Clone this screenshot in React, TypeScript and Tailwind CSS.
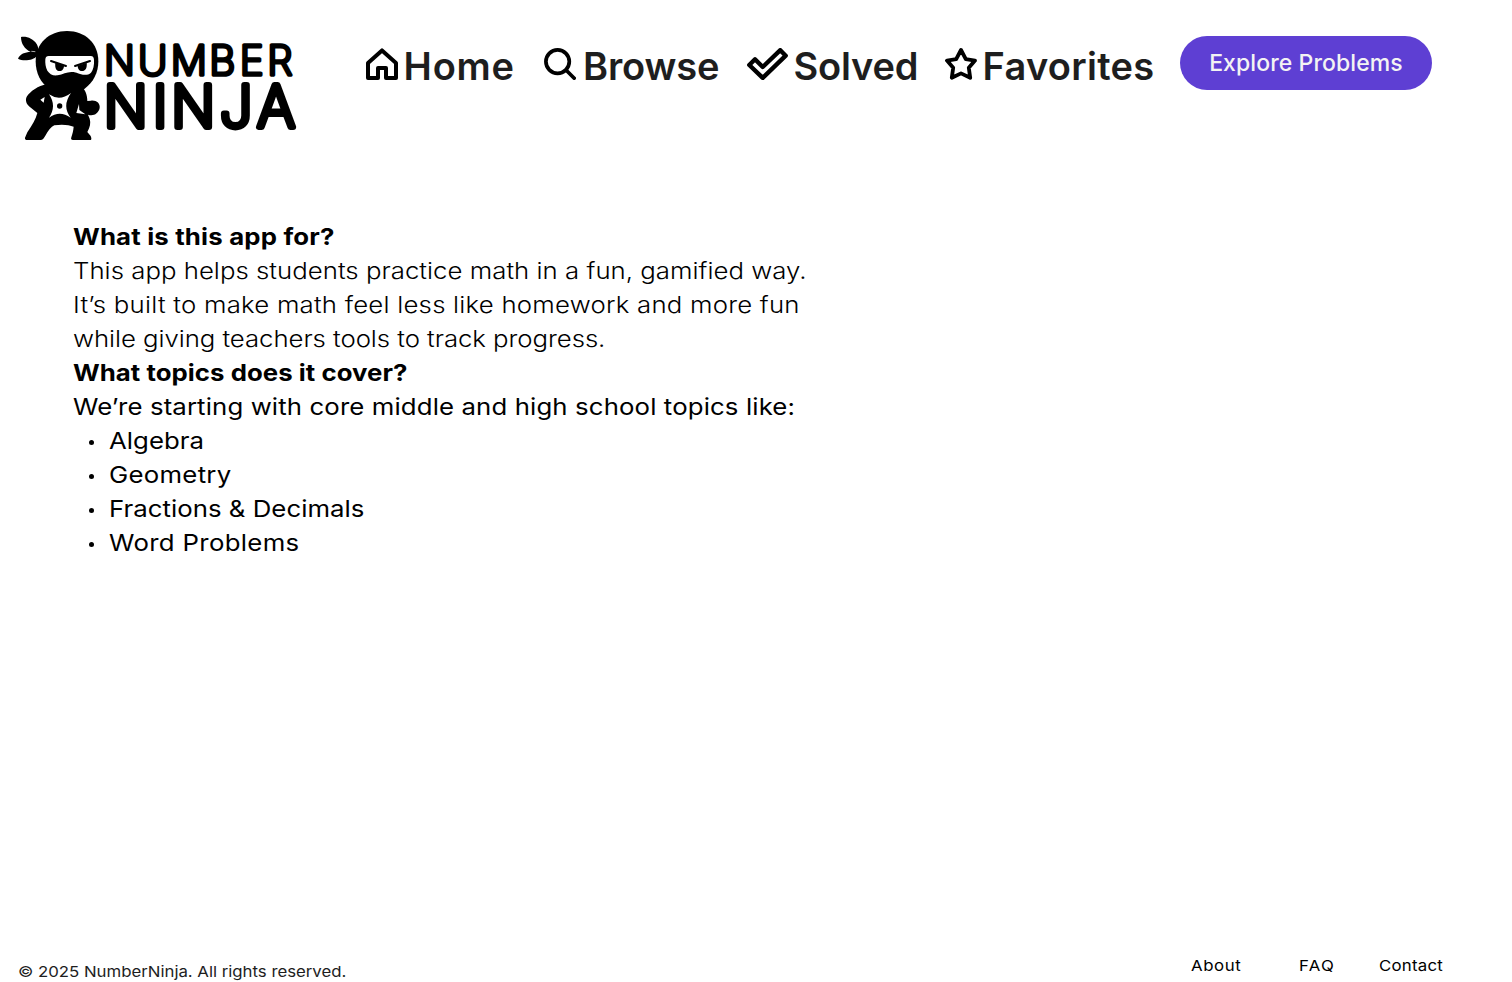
import React from "react";

function Logo() {
  return (
    <svg viewBox="0 0 885 375" className="h-[125px] w-[295px] shrink-0" role="img" aria-label="Number Ninja">
      {/* head scarf knot */}
      <path d="M33 39C50 36 70 44 80 60C84 67 86 74 84 80L92 92L80 97C72 108 40 114 24 104C30 90 45 84 62 84C44 74 33 60 33 39Z" />
      <path d="M64 82L76 83" stroke="#fff" strokeWidth="2" />
      {/* head */}
      <path d="M171 21C226 21 265 58 265 112C265 146 250 175 224 194L205 204H138L120 196C92 178 77 148 77 112C77 58 117 21 171 21Z" />
      <path d="M116 96H242C249 96 252 101 252 108C253 124 250 137 243 146C236 153 224 154 213 151C198 146 194 144 184 144C170 144 158 151 143 154C128 156 118 149 112 140C107 131 105 118 106 106C107 99 110 96 116 96Z" fill="#fff" />
      <path d="M123 111L168 126M240 111L195 126" fill="none" stroke="#000" strokeWidth="6" strokeLinecap="round" />
      <path d="M136 116L162 125C162 134 157 141 149 141C140 141 134 134 136 116ZM230 116L203 125C203 134 208 141 216 141C226 141 232 132 230 116Z" />
      {/* torso, arms and legs */}
      <path d="M110 180C84 186 62 201 51 217C45 227 48 238 57 247L82 267C77 286 67 303 52 325L45 341C44 346 47 348 52 348H91C99 348 102 341 106 335C115 319 123 309 133 304C154 300 177 302 191 308C190 321 187 331 184 340C182 346 184 348 189 348H241C246 348 244 341 242 336L232 324C240 309 243 297 239 284L234 272C250 277 265 270 269 252C271 238 259 228 243 230L232 231C232 212 226 194 208 182Z" />
      {/* gaps between arms and torso */}
      <path d="M91 227L104 219L101 236Z" fill="#fff" />
      <path d="M207 240L208 258L226 271L199 267Z" fill="#fff" />
      {/* throwing star */}
      <path d="M117 211Q149 233 183 207Q155 246 182 281Q149 257 117 281Q141 246 117 211Z" fill="#fff" />
      <circle cx="149" cy="246" r="8" />
      <g fill="#000" stroke="#000" strokeLinejoin="round" strokeLinecap="round" className="font-['Inter',sans-serif] font-extralight">
        <text x="282 384 482 598 689 772" y="153" fontSize="121" strokeWidth="11">NUMBER</text>
        <text x="281 428 484 630 742" y="308" fontSize="172" strokeWidth="18">NINJA</text>
      </g>
    </svg>
  );
}

const icon = "mt-1 h-8 shrink-0 fill-none stroke-black";

function HomeIcon() {
  return (
    <svg viewBox="0 0 32 32" className={`${icon} w-8`} strokeWidth="4" strokeLinejoin="round">
      <path d="M2 15L16 2.4L30 15V30H20V20H12V30H2Z" />
    </svg>
  );
}

function SearchIcon() {
  return (
    <svg viewBox="0 0 32 32" className={`${icon} w-8`} strokeWidth="3.7" strokeLinecap="round">
      <circle cx="13.6" cy="13.6" r="11.7" />
      <path d="M22 22L30.2 30.2" />
    </svg>
  );
}

function CheckIcon() {
  return (
    <svg viewBox="0 0 41 32" className={`${icon} w-[41px]`} strokeWidth="4.4" strokeLinejoin="round">
      <path d="M2.3 17L8 11.3L15.7 19L33.3 2.2L38.7 7.7L15.7 29.8Z" />
    </svg>
  );
}

function StarIcon() {
  return (
    <svg viewBox="0 0 32 32" className={`${icon} w-8`} strokeWidth="3.8" strokeLinejoin="round">
      <path d="M16 2L20.8 11.2L30 12.6L23.8 19.8L25.2 29.8L16 25.4L6.8 29.8L8.2 19.8L2 12.6L11.2 11.2Z" />
    </svg>
  );
}

const navItem = "flex items-start text-[38px] leading-[44px] font-semibold whitespace-nowrap text-[#1e1e1e]";

function Header() {
  return (
    <header className="flex items-start pt-6 pl-[10px]">
      <Logo />
      <nav className="mt-5 ml-[61px] flex">
        <a className={`${navItem} w-[178px] gap-[5.5px] tracking-[0.8px]`}><HomeIcon />Home</a>
        <a className={`${navItem} w-[203px] gap-[7px] tracking-[-0.15px]`}><SearchIcon />Browse</a>
        <a className={`${navItem} w-[198px] gap-[5.5px] tracking-[-0.2px]`}><CheckIcon />Solved</a>
        <a className={`${navItem} w-[235px] gap-[5.5px] tracking-[0.3px]`}><StarIcon />Favorites</a>
      </nav>
      <button className="mt-3 h-[54px] w-[252px] rounded-full bg-[#5e3fd3] text-[23px] font-medium tracking-[0.1px] whitespace-nowrap text-[#f3f3f3]">
        Explore Problems
      </button>
    </header>
  );
}

const wide = "block origin-left scale-x-112";

function Topic({ children }: { children: React.ReactNode }) {
  return (
    <li className="flex items-center">
      <span className="mt-[3px] mr-[15.5px] ml-[15.5px] size-[5px] rounded-full bg-black" />
      {children}
    </li>
  );
}

export default function App() {
  return (
    <div className="flex h-[982px] flex-col overflow-hidden bg-white font-['Inter',sans-serif] text-black">
      <Header />
      <main className="mt-[71px] ml-[73px] flex-1 text-[23px] leading-[34px] whitespace-nowrap">
        <h2 className={`${wide} font-bold tracking-[0.16px]`}>What is this app for?</h2>
        <p className="font-light">
          <span className={`${wide} tracking-[0.02px]`}>This app helps students practice math in a fun, gamified way.</span>
          <span className={`${wide} tracking-[0.2px]`}>It’s built to make math feel less like homework and more fun</span>
          <span className={`${wide} tracking-[-0.05px]`}>while giving teachers tools to track progress.</span>
        </p>
        <h2 className={`${wide} font-bold tracking-[0.04px]`}>What topics does it cover?</h2>
        <p className={`${wide} tracking-[0.11px]`}>We’re starting with core middle and high school topics like:</p>
        <ul>
          <Topic><span className={`${wide} tracking-[0.03px]`}>Algebra</span></Topic>
          <Topic><span className={`${wide} tracking-[0.25px]`}>Geometry</span></Topic>
          <Topic><span className={`${wide} tracking-[0.03px]`}>Fractions &amp; Decimals</span></Topic>
          <Topic><span className={`${wide} tracking-[0.3px]`}>Word Problems</span></Topic>
        </ul>
      </main>
      <footer className="flex h-[28px] items-start pl-[18px] text-[15px] leading-6 whitespace-nowrap">
        <div className="w-[1173px]"><p className={`${wide} mt-[6px] tracking-[-0.02px] text-[#1e1e1e]`}>© 2025 NumberNinja. All rights reserved.</p></div>
        <a className={`${wide} w-[108px] tracking-[0.5px]`}>About</a>
        <a className={`${wide} w-[80px] tracking-[1.2px]`}>FAQ</a>
        <a className={`${wide} tracking-[0.2px]`}>Contact</a>
      </footer>
    </div>
  );
}
